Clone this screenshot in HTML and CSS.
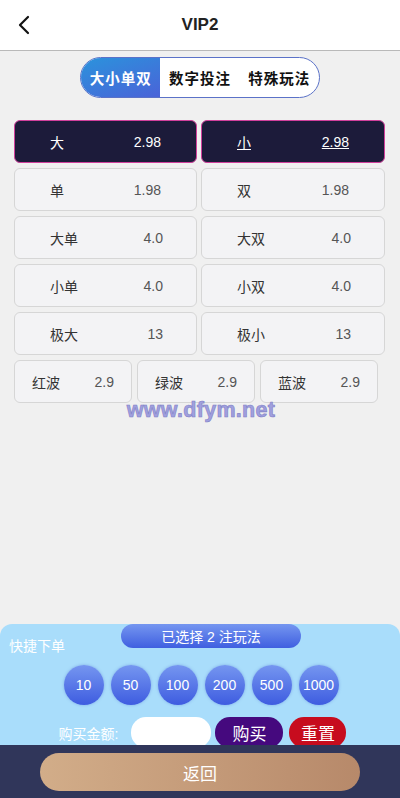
FILE: index.html
```html
<!DOCTYPE html>
<html lang="zh-CN">
<head>
    <meta charset="UTF-8">
    <meta name="viewport" content="width=device-width, initial-scale=1.0">
    <title>VIP2</title>
    <link rel="stylesheet" href="styles.css">
</head>
<body>
    <div class="pagina">
        <header class="topo">
            <a class="voltar" href="#">
                <svg width="14" height="20" viewBox="0 0 14 20"><path d="M11 2 L3 10 L11 18" fill="none" stroke="#111" stroke-width="2.2" stroke-linecap="round" stroke-linejoin="round"/></svg>
            </a>
            <h1>VIP2</h1>
        </header>

        <section class="conteudo">
            <div class="abas">
                <a href="#" class="ativa">大小单双</a>
                <a href="#">数字投注</a>
                <a href="#">特殊玩法</a>
            </div>

            <div class="grade">
                <div class="opcao selecionada"><span>大</span><span>2.98</span></div>
                <div class="opcao selecionada sublinhada"><span>小</span><span>2.98</span></div>
                <div class="opcao"><span>单</span><span>1.98</span></div>
                <div class="opcao"><span>双</span><span>1.98</span></div>
                <div class="opcao"><span>大单</span><span class="curto">4.0</span></div>
                <div class="opcao"><span>大双</span><span class="curto">4.0</span></div>
                <div class="opcao"><span>小单</span><span class="curto">4.0</span></div>
                <div class="opcao"><span>小双</span><span class="curto">4.0</span></div>
                <div class="opcao"><span>极大</span><span class="curto">13</span></div>
                <div class="opcao"><span>极小</span><span class="curto">13</span></div>
            </div>
            <div class="ondas">
                <div class="opcao"><span>红波</span><span>2.9</span></div>
                <div class="opcao"><span>绿波</span><span>2.9</span></div>
                <div class="opcao"><span>蓝波</span><span>2.9</span></div>
            </div>
            <div class="marca">www.dfym.net</div>
        </section>

        <section class="painel">
            <div class="linha-topo">
                <span class="rotulo">快捷下单</span>
                <div class="contagem">已选择 2 注玩法</div>
            </div>
            <div class="fichas">
                <a href="#">10</a>
                <a href="#">50</a>
                <a href="#">100</a>
                <a href="#">200</a>
                <a href="#">500</a>
                <a href="#">1000</a>
            </div>
            <div class="compra">
                <span>购买金额:</span>
                <input type="text">
                <button class="comprar">购买</button>
                <button class="resetar">重置</button>
            </div>
        </section>

        <footer class="rodape">
            <button class="retornar">返回</button>
        </footer>
    </div>
</body>
</html>
```

FILE: styles.css
```css
body {
    margin: 0px;
    padding: 0px;
    font-family: "Liberation Sans", "Noto Sans CJK SC", sans-serif;
    background-color: #f0f0f0;
}

.pagina {
    height: 798px;
    display: flex;
    flex-direction: column;
    overflow: hidden;
}

.topo {
    height: 50px;
    background-color: #fff;
    border-bottom: 1px solid #b9b9b9;
    display: flex;
    align-items: center;
    justify-content: center;
    position: relative;
    flex-shrink: 0;
}

.topo h1 {
    margin: 0;
    font-size: 17px;
    font-weight: bold;
    color: #222;
}

.voltar {
    position: absolute;
    left: 17px;
    top: 15px;
    display: block;
    line-height: 0;
}

.conteudo {
    flex: 1;
    position: relative;
}

/* abas do topo */
.abas {
    width: 238px;
    height: 39px;
    margin: 6px auto 0;
    border: 1px solid #5b72c8;
    border-radius: 21px;
    background-color: #fff;
    display: flex;
    overflow: hidden;
}

.abas a {
    flex: 1;
    display: flex;
    align-items: center;
    justify-content: center;
    text-decoration: none;
    color: #111;
    font-weight: bold;
    font-size: 14.5px;
    letter-spacing: 1px;
}

.abas .ativa {
    color: #fff;
    background: linear-gradient(160deg, #2b93dc, #4a63d8);
}

.grade {
    display: grid;
    grid-template-columns: 183px 184px;
    gap: 5px 4px;
    margin: 22px 0 0 14px;
}

.opcao {
    height: 41px;
    background-color: #f3f3f5;
    border: 1px solid #d6d6d6;
    border-radius: 6px;
    display: flex;
    align-items: center;
    justify-content: space-between;
    padding: 0 35px;
    font-size: 14px;
    color: #333;
}

.opcao span:last-child {
    color: #555;
}

.opcao .curto {
    margin-right: -2px;
}

.opcao.selecionada {
    background-color: #1c1b3a;
    border-color: #d0409c;
    color: #fff;
}

.opcao.selecionada span:last-child {
    color: #fff;
}

.sublinhada span {
    text-decoration: underline;
}

.ondas {
    display: flex;
    gap: 5px;
    margin: 5px 0 0 14px;
}

.ondas .opcao {
    width: 118px;
    box-sizing: border-box;
    height: 43px;
    padding: 0 17px 0 17px;
}

.marca {
    position: absolute;
    left: 0;
    right: 0;
    top: 347px;
    padding-left: 2px;
    text-align: center;
    font-size: 21.5px;
    font-weight: bold;
    color: #a0a0de;
    -webkit-text-stroke: 0.6px #7f7fc6;
    letter-spacing: 0.3px;
}

/* painel de aposta rapida */
.painel {
    height: 121px;
    background-color: #a9ddfb;
    border-radius: 12px 12px 0 0;
    overflow: hidden;
    flex-shrink: 0;
}

.linha-topo {
    display: grid;
    grid-template-columns: 121px 180px 1fr;
    grid-template-rows: 24px;
    align-items: start;
}

.rotulo {
    color: #fff;
    font-size: 14px;
    line-height: 16px;
    margin: 14px 0 0 9px;
}

.contagem {
    height: 24px;
    border-radius: 12px;
    background: linear-gradient(180deg, #7596f0, #3f5fe0);
    color: #fff;
    font-size: 14px;
    display: flex;
    align-items: center;
    justify-content: center;
}

.fichas {
    display: flex;
    justify-content: center;
    gap: 7px;
    margin-top: 17px;
    padding-left: 2px;
}

.fichas a {
    width: 40px;
    height: 40px;
    border-radius: 50%;
    background: linear-gradient(180deg, #7596f0, #3e5ce0);
    box-shadow: 0 0 3px rgba(60, 90, 200, 0.4);
    color: #fff;
    text-decoration: none;
    font-size: 14px;
    display: flex;
    align-items: center;
    justify-content: center;
}

.compra {
    display: flex;
    align-items: center;
    justify-content: center;
    margin-top: 12px;
    padding-left: 5px;
}

.compra span {
    color: #fff;
    font-size: 14px;
    margin-right: 13px;
}

.compra input {
    width: 80px;
    height: 31px;
    border: none;
    border-radius: 15px;
    background-color: #fff;
    padding: 0;
    margin-right: 4px;
}

.compra button {
    height: 31px;
    border: none;
    border-radius: 15px;
    color: #fff;
    font-size: 17px;
    padding: 0;
    font-family: "Liberation Sans", "Noto Sans CJK SC", sans-serif;
}

.comprar {
    width: 68px;
    background-color: #45097e;
    margin-right: 6px;
}

.resetar {
    width: 57px;
    background-color: #c70c1e;
}

.rodape {
    height: 53px;
    background-color: #30365a;
    display: flex;
    justify-content: center;
    padding-top: 8px;
    box-sizing: border-box;
    flex-shrink: 0;
}

.retornar {
    width: 320px;
    height: 38px;
    border: none;
    border-radius: 19px;
    background: linear-gradient(90deg, #d2ad89, #b7896a);
    color: #fff;
    font-size: 17px;
    font-family: "Liberation Sans", "Noto Sans CJK SC", sans-serif;
}
```
